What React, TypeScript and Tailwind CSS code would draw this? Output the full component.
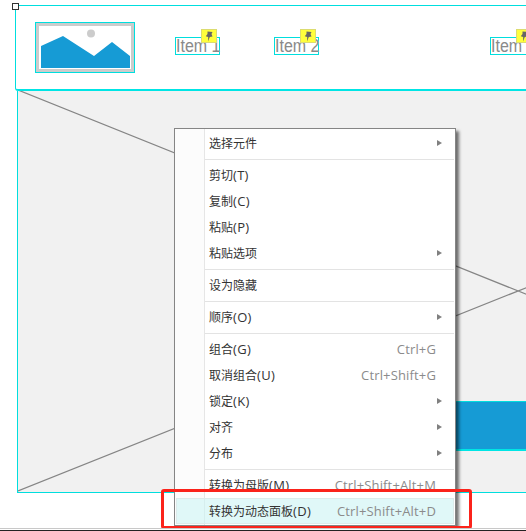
type MenuEntry =
  | { type: "sep" }
  | { type: "item"; label: string; hotkey?: string; shortcut?: string; sub?: boolean; active?: boolean };

const menu: MenuEntry[] = [
  { type: "item", label: "选择元件", sub: true },
  { type: "sep" },
  { type: "item", label: "剪切", hotkey: "(T)" },
  { type: "item", label: "复制", hotkey: "(C)" },
  { type: "item", label: "粘贴", hotkey: "(P)" },
  { type: "item", label: "粘贴选项", sub: true },
  { type: "sep" },
  { type: "item", label: "设为隐藏" },
  { type: "sep" },
  { type: "item", label: "顺序", hotkey: "(O)", sub: true },
  { type: "sep" },
  { type: "item", label: "组合", hotkey: "(G)", shortcut: "Ctrl+G" },
  { type: "item", label: "取消组合", hotkey: "(U)", shortcut: "Ctrl+Shift+G" },
  { type: "item", label: "锁定", hotkey: "(K)", sub: true },
  { type: "item", label: "对齐", sub: true },
  { type: "item", label: "分布", sub: true },
  { type: "sep" },
  { type: "item", label: "转换为母版", hotkey: "(M)", shortcut: "Ctrl+Shift+Alt+M" },
  { type: "item", label: "转换为动态面板", hotkey: "(D)", shortcut: "Ctrl+Shift+Alt+D", active: true },
];

function NavItem({ label, className }: { label: string; className: string }) {
  return (
    <div className={`relative mt-[15px] h-[18px] w-[45px] shrink-0 border border-[#00dede] font-['Liberation_Sans',sans-serif] text-[16px] leading-[16px] whitespace-nowrap text-[#8a8a8a] ${className}`}>
      <span className="block origin-center scale-y-[1.15]">{label}</span>
      <div className="absolute top-[-9px] right-[2px] flex h-[14px] w-[16px] items-center justify-center border border-[#dcdc70] bg-[#ffff3c]">
        <svg width="8" height="11" viewBox="0 0 8 11">
          <path d="M2.5 0.5 L7.5 1 L6.5 3 L7.5 5.5 L4.8 6 L3 10.5 L3.2 6 L0.8 5.2 L2.5 3 Z" fill="#666" />
        </svg>
      </div>
    </div>
  );
}

function ContextMenu() {
  return (
    <div className="absolute top-[128px] left-[174px] h-[398px] w-[282px] border border-[#858585] bg-white py-px font-['Noto_Sans_CJK_SC',sans-serif] text-[12px] text-[#333] shadow-[3px_3px_3px_rgba(0,0,0,0.55)]">
      <div className="absolute top-0 bottom-0 left-0 w-[30px] border-r border-[#e6e6e6] bg-[#fcfcfc]" />
      {menu.map((entry, i) =>
        entry.type === "sep" ? (
          <div key={i} className="relative flex h-[6px] items-center pr-px pl-[30px]">
            <div className="h-[1px] w-full bg-[#e3e3e3]" />
          </div>
        ) : (
          <div
            key={i}
            className={
              entry.active
                ? "relative mx-px flex h-[26px] items-center border border-[#dcebeb] bg-[#e0f8f8] pr-[17px] pl-[32px]"
                : "relative flex h-[26px] items-center pr-[19px] pl-[34px]"
            }
          >
            {entry.active ? <span className="absolute inset-y-0 left-[27px] w-px bg-[#d6eeee]" /> : null}
            <span className="flex-1 leading-[16px] whitespace-nowrap">
              {entry.label}
              {entry.hotkey ? (
                <span className="font-['Open_Sans',sans-serif] text-[13px] leading-[0] tracking-[0.3px]">{entry.hotkey}</span>
              ) : null}
            </span>
            {entry.shortcut ? (
              <span className="font-['Open_Sans',sans-serif] text-[13px] leading-[16px] tracking-[0.15px] whitespace-nowrap text-[#8b8b8b]">
                {entry.shortcut}
              </span>
            ) : null}
            {entry.sub ? (
              <span className="absolute right-[13px] h-0 w-0 border-y-[3.5px] border-l-[5px] border-y-transparent border-l-[#808080]" />
            ) : null}
          </div>
        ),
      )}
    </div>
  );
}

export default function App() {
  return (
    <div className="flex h-[531px] w-[526px] flex-col overflow-hidden bg-white">
      <div className="relative h-[528px] w-full shrink-0 overflow-hidden pt-[5px] pl-[15px]">
        {/* header frame */}
        <div className="flex h-[86px] w-[530px] items-start rounded-bl-[3px] border-t border-b-2 border-l border-t-[#00dede] border-b-[#00e5e5] border-l-[#00dede] pt-[16px] pl-[19px]">
          <div className="h-[51px] w-[100px] shrink-0 border border-[#00dede]">
            <div className="h-full w-full border-[3px] border-[#ccc] bg-white">
              <svg width="92" height="43" viewBox="0 0 92 43" className="block">
                <circle cx="52" cy="7.5" r="4" fill="#ccc" />
                <path d="M2 20 L24 10 L55 30 L73 16 L91 30 L91 42 L2 42 Z" fill="#169bd5" />
              </svg>
            </div>
          </div>
          <NavItem label="Item 1" className="ml-[40px]" />
          <NavItem label="Item 2" className="ml-[54px]" />
          <NavItem label="Item 3" className="ml-[171px]" />
        </div>
        <div className="absolute top-[3px] left-[12px] h-[7px] w-[7px] border border-[#333] bg-white" />

        {/* placeholder */}
        <div className="ml-[2px] h-[402px] w-[530px] border-b border-l border-b-[#00dede] border-l-[#00dede] bg-[#f1f1f1]">
          <svg width="510" height="402" viewBox="0 0 510 402" className="block">
            <path d="M0 -1 L510 204 M0 400 L510 196" stroke="#858585" strokeWidth="1.2" fill="none" />
          </svg>
        </div>

        <div className="absolute top-[401px] left-[400px] h-[50px] w-[140px] border-t border-b-2 border-t-[#00dede] border-b-[#00e5e5] bg-[#169bd5]" />

        <ContextMenu />

        <div className="absolute top-[489px] left-[161px] h-[40px] w-[311px] rounded-[3px] border-[3px] border-[#fb231b]" />
      </div>
      <div className="h-px w-full shrink-0 bg-[#c8c8c8]" />
      <div className="h-px w-full shrink-0 bg-white" />
      <div className="h-px w-full shrink-0 bg-[#222]" />
    </div>
  );
}
